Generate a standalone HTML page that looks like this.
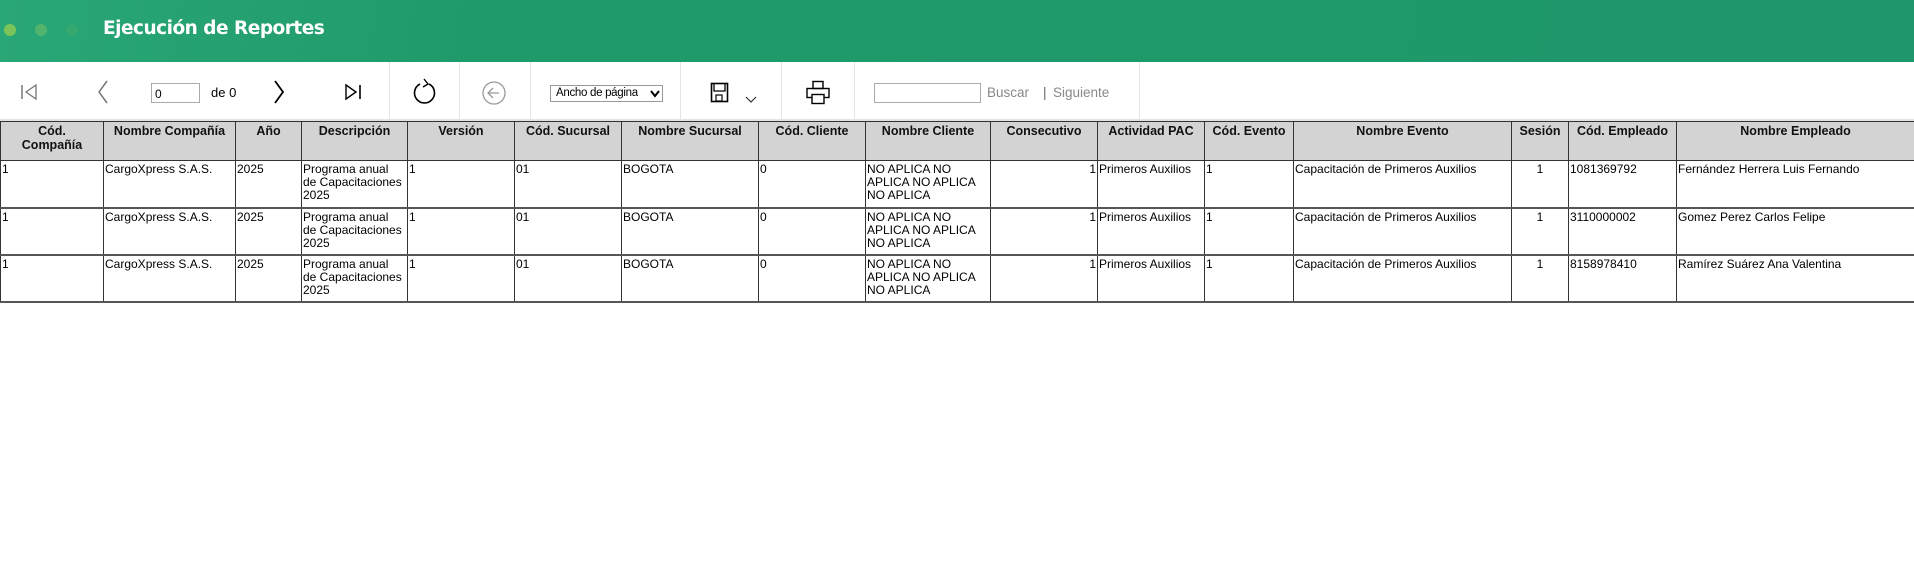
<!DOCTYPE html>
<html><head><meta charset="utf-8"><style>
*{margin:0;padding:0;box-sizing:border-box}
body{width:1914px;height:574px;background:#fff;font-family:"Liberation Sans",Arial,sans-serif;position:relative;overflow:hidden}
.hdr{position:absolute;left:0;top:0;width:1914px;height:62px;background:linear-gradient(100deg,#2aa777 0%,#1f9a6b 25%,#1e986a 100%)}
.dot{position:absolute;top:24px;width:12px;height:12px;border-radius:50%}
.title{position:absolute;left:103px;top:18px;color:#fff;font:bold 18.5px "DejaVu Sans","Liberation Sans",sans-serif;letter-spacing:-0.5px}
.tb{position:absolute;left:0;top:62px;width:1914px;height:59px;border-bottom:2px solid #e2e2e2}
.sep{position:absolute;top:0;width:1px;height:57px;background:#e4e4e4}
.ab{position:absolute}
table{position:absolute;left:0;top:121px;border-collapse:collapse;table-layout:fixed;width:1914px}
th,td{border:1px solid #333;vertical-align:top;overflow:hidden}
th{background:#d3d3d3;font-weight:bold;font-size:12.5px;line-height:14px;height:39px;padding:2px 2px;text-align:center;color:#111}
td{font-size:12px;line-height:13px;height:47px;padding:2px 1px 0 1px;color:#000}
tr.r td{border-bottom:2px solid #555}
.rt{text-align:right}.ct{text-align:center}
</style></head><body>
<div class="hdr">
<div class="dot" style="left:4px;background:#7cc45a"></div>
<div class="dot" style="left:35px;background:#5cb86a;opacity:.8"></div>
<div class="dot" style="left:66px;background:#3aa96e;opacity:.7"></div>
<div class="title">Ejecución de Reportes</div>
</div>
<div class="tb">
<svg class="ab" style="left:20px;top:19px" width="20" height="22" viewBox="0 0 20 22"><path d="M2 4V18" stroke="#777" stroke-width="1.5"/><path d="M16 4L6 11L16 18Z" fill="none" stroke="#777" stroke-width="1.3"/></svg>
<svg class="ab" style="left:96px;top:17px" width="14" height="26" viewBox="0 0 14 26"><path d="M11 2L3 13L11 24" fill="none" stroke="#777" stroke-width="1.5"/></svg>
<div class="ab" style="left:151px;top:21px;width:49px;height:20px;border:1px solid #aaa;font-size:12px;padding:3px 0 0 3px">0</div>
<div class="ab" style="left:211px;top:23px;font-size:13px">de 0</div>
<svg class="ab" style="left:272px;top:17px" width="14" height="26" viewBox="0 0 14 26"><path d="M3 2L11 13L3 24" fill="none" stroke="#000" stroke-width="1.8"/></svg>
<svg class="ab" style="left:343px;top:19px" width="20" height="22" viewBox="0 0 20 22"><path d="M3 4L13 11L3 18Z" fill="none" stroke="#000" stroke-width="1.4"/><path d="M17 4V18" stroke="#000" stroke-width="1.6"/></svg>
<div class="sep" style="left:389px"></div>
<svg class="ab" style="left:410px;top:16px" width="28" height="30" viewBox="0 0 28 30"><path d="M10 6A10 10 0 1 0 19 6" fill="none" stroke="#000" stroke-width="1.6"/><path d="M14 1L18 6L13 9" fill="none" stroke="#000" stroke-width="1.4"/></svg>
<div class="sep" style="left:459px"></div>
<svg class="ab" style="left:481px;top:18px" width="26" height="26" viewBox="0 0 26 26"><circle cx="13" cy="13" r="11" fill="none" stroke="#999" stroke-width="1.3"/><path d="M18 13H8M12 8L7 13L12 18" fill="none" stroke="#999" stroke-width="1.3"/></svg>
<div class="sep" style="left:530px"></div>
<div class="ab" style="left:550px;top:23px;width:113px;height:17px;border:1px solid #999;font-size:11.5px;padding:1px 0 0 5px;letter-spacing:-0.3px">Ancho de página</div>
<svg class="ab" style="left:650px;top:28px" width="10" height="8" viewBox="0 0 10 8"><path d="M1 1L5 6L9 1" fill="none" stroke="#000" stroke-width="2"/></svg>
<div class="sep" style="left:680px"></div>
<svg class="ab" style="left:710px;top:20px" width="20" height="22" viewBox="0 0 20 22"><rect x="1.5" y="1.5" width="16" height="18" fill="none" stroke="#000" stroke-width="1.6"/><path d="M4 2V9H15V2" fill="none" stroke="#000" stroke-width="1.3"/><rect x="6" y="13" width="6" height="6" fill="none" stroke="#000" stroke-width="1.2"/></svg>
<svg class="ab" style="left:744px;top:33px" width="14" height="10" viewBox="0 0 14 10"><path d="M2 2L7 7L12 2" fill="none" stroke="#333" stroke-width="1.2"/></svg>
<div class="sep" style="left:781px"></div>
<svg class="ab" style="left:805px;top:18px" width="26" height="26" viewBox="0 0 26 26"><rect x="8" y="1.5" width="10" height="7" fill="none" stroke="#000" stroke-width="1.4"/><rect x="2" y="8.5" width="22" height="9" fill="none" stroke="#000" stroke-width="1.4"/><rect x="7" y="14.5" width="12" height="9" fill="#fff" stroke="#000" stroke-width="1.4"/></svg>
<div class="sep" style="left:854px"></div>
<div class="ab" style="left:874px;top:21px;width:107px;height:20px;border:1px solid #aaa"></div>
<div class="ab" style="left:987px;top:23px;font-size:13.5px;color:#888">Buscar</div>
<div class="ab" style="left:1043px;top:23px;font-size:13.5px;color:#666">|</div>
<div class="ab" style="left:1053px;top:23px;font-size:13.5px;color:#888">Siguiente</div>
<div class="sep" style="left:1139px"></div>
</div>
<table>
<colgroup><col style="width:103px"><col style="width:132px"><col style="width:66px"><col style="width:106px"><col style="width:107px"><col style="width:107px"><col style="width:137px"><col style="width:107px"><col style="width:125px"><col style="width:107px"><col style="width:107px"><col style="width:89px"><col style="width:218px"><col style="width:57px"><col style="width:108px"><col style="width:238px"></colgroup>
<tr><th>Cód.<br>Compañía</th><th>Nombre Compañía</th><th>Año</th><th>Descripción</th><th>Versión</th><th>Cód. Sucursal</th><th>Nombre Sucursal</th><th>Cód. Cliente</th><th>Nombre Cliente</th><th>Consecutivo</th><th>Actividad PAC</th><th>Cód. Evento</th><th>Nombre Evento</th><th>Sesión</th><th>Cód. Empleado</th><th>Nombre Empleado</th></tr>
<tr class="r"><td>1</td><td>CargoXpress S.A.S.</td><td>2025</td><td>Programa anual<br>de Capacitaciones<br>2025</td><td>1</td><td>01</td><td>BOGOTA</td><td>0</td><td>NO APLICA NO APLICA NO APLICA NO APLICA</td><td class="rt">1</td><td>Primeros Auxilios</td><td>1</td><td>Capacitación de Primeros Auxilios</td><td class="ct">1</td><td>1081369792</td><td>Fernández Herrera Luis Fernando</td></tr>
<tr class="r"><td>1</td><td>CargoXpress S.A.S.</td><td>2025</td><td>Programa anual<br>de Capacitaciones<br>2025</td><td>1</td><td>01</td><td>BOGOTA</td><td>0</td><td>NO APLICA NO APLICA NO APLICA NO APLICA</td><td class="rt">1</td><td>Primeros Auxilios</td><td>1</td><td>Capacitación de Primeros Auxilios</td><td class="ct">1</td><td>3110000002</td><td>Gomez Perez Carlos Felipe</td></tr>
<tr class="r"><td>1</td><td>CargoXpress S.A.S.</td><td>2025</td><td>Programa anual<br>de Capacitaciones<br>2025</td><td>1</td><td>01</td><td>BOGOTA</td><td>0</td><td>NO APLICA NO APLICA NO APLICA NO APLICA</td><td class="rt">1</td><td>Primeros Auxilios</td><td>1</td><td>Capacitación de Primeros Auxilios</td><td class="ct">1</td><td>8158978410</td><td>Ramírez Suárez Ana Valentina</td></tr>
</table>
</body></html>
